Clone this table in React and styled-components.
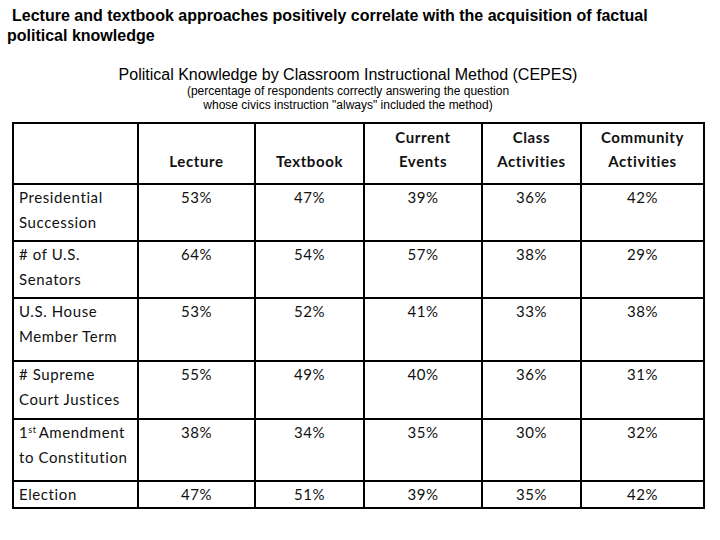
import React from "react";
import styled, { createGlobalStyle } from "styled-components";

const GlobalStyle = createGlobalStyle`
  body {
    margin: 0;
    background: #ffffff;
  }
`;

// Styled Components
const StyledPage = styled.div`
  width: 720px;
  height: 540px;
  background: #ffffff;
  color: #000000;
  overflow: hidden;
`;
const StyledHeadline = styled.h1`
  margin: 0;
  padding: 6px 0 0 7px;
  max-width: 660px;
  font-family: "Liberation Sans", Arial, sans-serif;
  font-size: 16px;
  font-weight: bold;
  line-height: 20px;
  text-indent: 5px;
`;
const StyledCaption = styled.div`
  margin-top: 20px;
  padding-right: 24px;
  text-align: center;
  font-family: "Liberation Sans", Arial, sans-serif;
`;
const StyledCaptionTitle = styled.div`
  font-size: 16px;
  line-height: 18px;
`;
const StyledCaptionNote = styled.div`
  font-size: 12px;
  line-height: 14px;
`;
const StyledGrid = styled.div`
  margin: 10px 0 0 12px;
  display: inline-grid;
  grid-template-columns: 123px 115px 107px 116px 97px 121px;
  grid-template-rows: 59px 55px 55px 61px 56px 60px 25px;
  gap: 2px;
  padding: 2px;
  background: #000000;
  font-family: Lato, "Open Sans", sans-serif;
  font-size: 15px;
  letter-spacing: 0.6px;
  color: #111111;
`;
const StyledHeadCell = styled.div`
  background: #ffffff;
  display: flex;
  flex-direction: column;
  justify-content: flex-end;
  align-items: center;
  text-align: center;
  padding-bottom: 10px;
  font-weight: bold;
  line-height: 24px;
`;
const StyledCell = styled.div`
  background: #ffffff;
  line-height: 25px;
  padding-left: ${(p) => (p.$label ? "5px" : "0")};
  text-align: ${(p) => (p.$label ? "left" : "center")};
`;
const StyledSup = styled.sup`
  font-size: 9px;
  line-height: 0;
  vertical-align: 5px;
  margin-right: 2px;
`;

const headers = [
  "",
  ["Lecture"],
  ["Textbook"],
  ["Current", "Events"],
  ["Class", "Activities"],
  ["Community", "Activities"],
];

const rows = [
  { label: ["Presidential", "Succession"], values: ["53%", "47%", "39%", "36%", "42%"] },
  { label: ["# of U.S.", "Senators"], values: ["64%", "54%", "57%", "38%", "29%"] },
  { label: ["U.S. House", "Member Term"], values: ["53%", "52%", "41%", "33%", "38%"] },
  { label: ["# Supreme", "Court Justices"], values: ["55%", "49%", "40%", "36%", "31%"] },
  { label: "amendment", values: ["38%", "34%", "35%", "30%", "32%"] },
  { label: ["Election"], values: ["47%", "51%", "39%", "35%", "42%"] },
];

function Label({ label }) {
  if (label === "amendment") {
    return (
      <>
        1<StyledSup>st</StyledSup>Amendment
        <br />
        to Constitution
      </>
    );
  }
  return label.map((line, i) => (
    <React.Fragment key={i}>
      {i > 0 && <br />}
      {line}
    </React.Fragment>
  ));
}

function App() {
  return (
    <StyledPage>
      <GlobalStyle />
      <StyledHeadline>
        Lecture and textbook approaches positively correlate with the
        acquisition of factual political knowledge
      </StyledHeadline>
      <StyledCaption>
        <StyledCaptionTitle>
          Political Knowledge by Classroom Instructional Method (CEPES)
        </StyledCaptionTitle>
        <StyledCaptionNote>
          (percentage of respondents correctly answering the question
          <br />
          whose civics instruction "always" included the method)
        </StyledCaptionNote>
      </StyledCaption>
      <StyledGrid>
        {headers.map((h, i) => (
          <StyledHeadCell key={i}>
            {h &&
              h.map((line) => <div key={line}>{line}</div>)}
          </StyledHeadCell>
        ))}
        {rows.map((row, r) => (
          <React.Fragment key={r}>
            <StyledCell $label>
              <Label label={row.label} />
            </StyledCell>
            {row.values.map((v, c) => (
              <StyledCell key={c}>{v}</StyledCell>
            ))}
          </React.Fragment>
        ))}
      </StyledGrid>
    </StyledPage>
  );
}

export default App;
